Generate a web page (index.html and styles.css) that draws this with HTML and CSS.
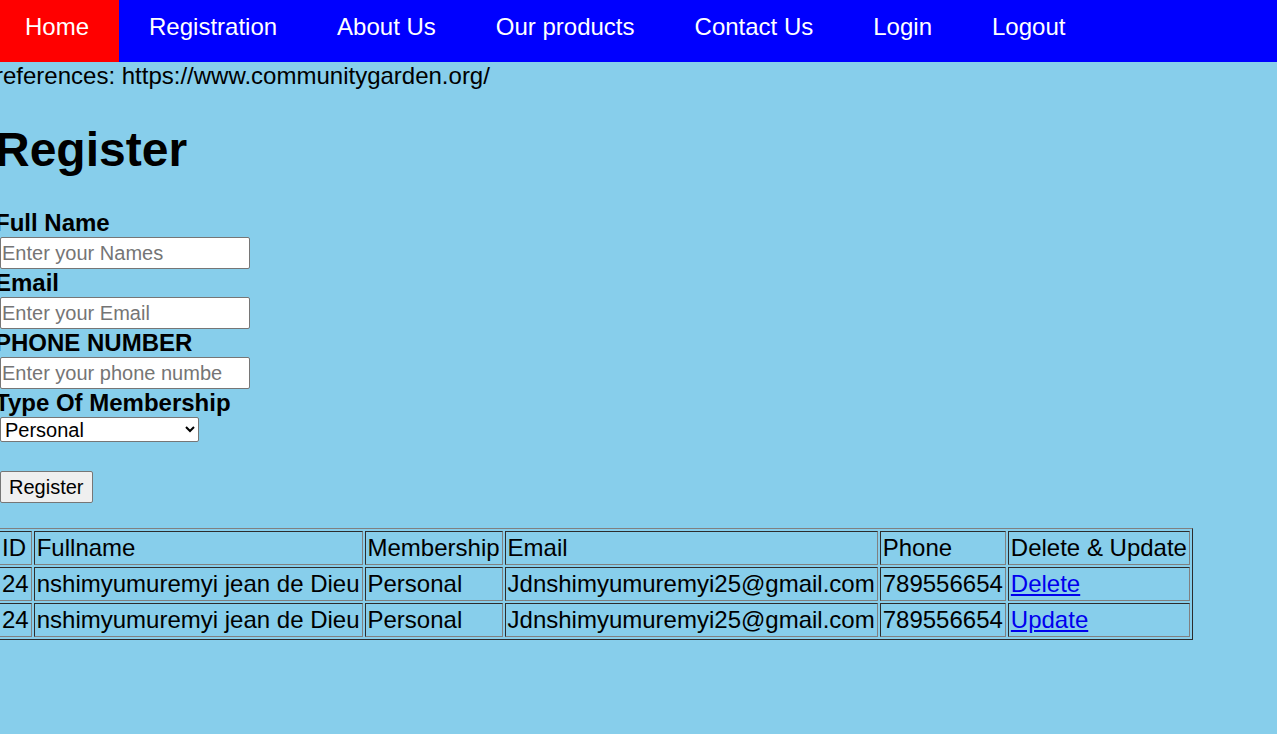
FILE: index.html
```html
<!DOCTYPE html>
<html>
<head>
<meta charset="utf-8">
<title>Register</title>
<link rel="stylesheet" href="styles.css">
</head>
<body>
<div class="page">
  <ul class="nav">
    <li><a class="active" href="#">Home</a></li>
    <li><a href="#">Registration</a></li>
    <li><a href="#">About Us</a></li>
    <li><a href="#">Our products</a></li>
    <li><a href="#">Contact Us</a></li>
    <li><a href="#">Login</a></li>
    <li><a href="#">Logout</a></li>
  </ul>
  <p class="refs">references: https://www.communitygarden.org/</p>
  <h1 class="title">Register</h1>
  <form class="form">
    <label class="label">Full Name</label>
    <input class="field" type="text" placeholder="Enter your Names">
    <label class="label">Email</label>
    <input class="field" type="text" placeholder="Enter your Email">
    <label class="label">PHONE NUMBER</label>
    <input class="field" type="text" placeholder="Enter your phone number">
    <label class="label">Type Of Membership</label>
    <select class="select">
      <option>Personal</option>
      <option>Family</option>
    </select>
    <div class="spacer"></div>
    <button class="btn" type="button">Register</button>
  </form>
  <table class="grid">
    <tr><td>ID</td><td>Fullname</td><td>Membership</td><td>Email</td><td>Phone</td><td>Delete &amp; Update</td></tr>
    <tr><td>24</td><td>nshimyumuremyi jean de Dieu</td><td>Personal</td><td>Jdnshimyumuremyi25@gmail.com</td><td>789556654</td><td><a class="link" href="#">Delete</a></td></tr>
    <tr><td>24</td><td>nshimyumuremyi jean de Dieu</td><td>Personal</td><td>Jdnshimyumuremyi25@gmail.com</td><td>789556654</td><td><a class="link" href="#">Update</a></td></tr>
  </table>
</div>
</body>
</html>
```

FILE: styles.css
```css
html, body {
  margin: 0;
  padding: 0;
  background: #87ceeb;
  font-family: "Liberation Sans", Arial, sans-serif;
  color: #000;
  overflow: hidden;
}
.page {
  margin-left: -5px;
}
.nav {
  list-style: none;
  margin: 0;
  padding: 0;
  display: flex;
  background: #0000ff;
}
.nav a {
  display: block;
  padding: 13px 30px 21px;
  font-size: 24px;
  line-height: 28px;
  color: #fff;
  text-decoration: none;
}
.nav a.active {
  background: #ff0000;
}
.refs {
  margin: 0;
  font-size: 24px;
  line-height: 28px;
}
.title {
  font-size: 48px;
  margin: 32px 0 32px;
  line-height: 55px;
}
.form {
  display: flex;
  flex-direction: column;
  align-items: flex-start;
}
.label {
  font-size: 24px;
  font-weight: bold;
  line-height: 28px;
}
.field {
  width: 250px;
  height: 32px;
  box-sizing: border-box;
  margin: 0 0 0 5px;
  font-family: "Liberation Sans", Arial, sans-serif;
  font-size: 20px;
  padding: 1px 27px 1px 1px;
  border: 1px solid #767676;
  border-radius: 2px;
  background: #fff;
}
.field::placeholder {
  color: #757575;
}
.select {
  width: 199px;
  height: 25px;
  margin: 0 0 0 5px;
  font-family: "Liberation Sans", Arial, sans-serif;
  font-size: 20px;
  border: 1px solid #767676;
  border-radius: 2px;
  background: #fff;
}
.spacer {
  height: 29px;
}
.btn {
  height: 32px;
  margin-left: 5px;
  font-family: "Liberation Sans", Arial, sans-serif;
  font-size: 20px;
  padding: 1px 9px 1px 8px;
  border: 1px solid #767676;
  border-radius: 2px;
  background: #efefef;
  color: #000;
}
.grid {
  margin-top: 25px;
  margin-left: 1px;
  border: 1px outset #808080;
  border-spacing: 2px;
  font-size: 24px;
}
.grid td {
  border: 1px inset #808080;
  padding: 1px 2px;
  line-height: 30px;
  white-space: nowrap;
}
.link {
  color: #0000ee;
  text-decoration: underline;
}
```
